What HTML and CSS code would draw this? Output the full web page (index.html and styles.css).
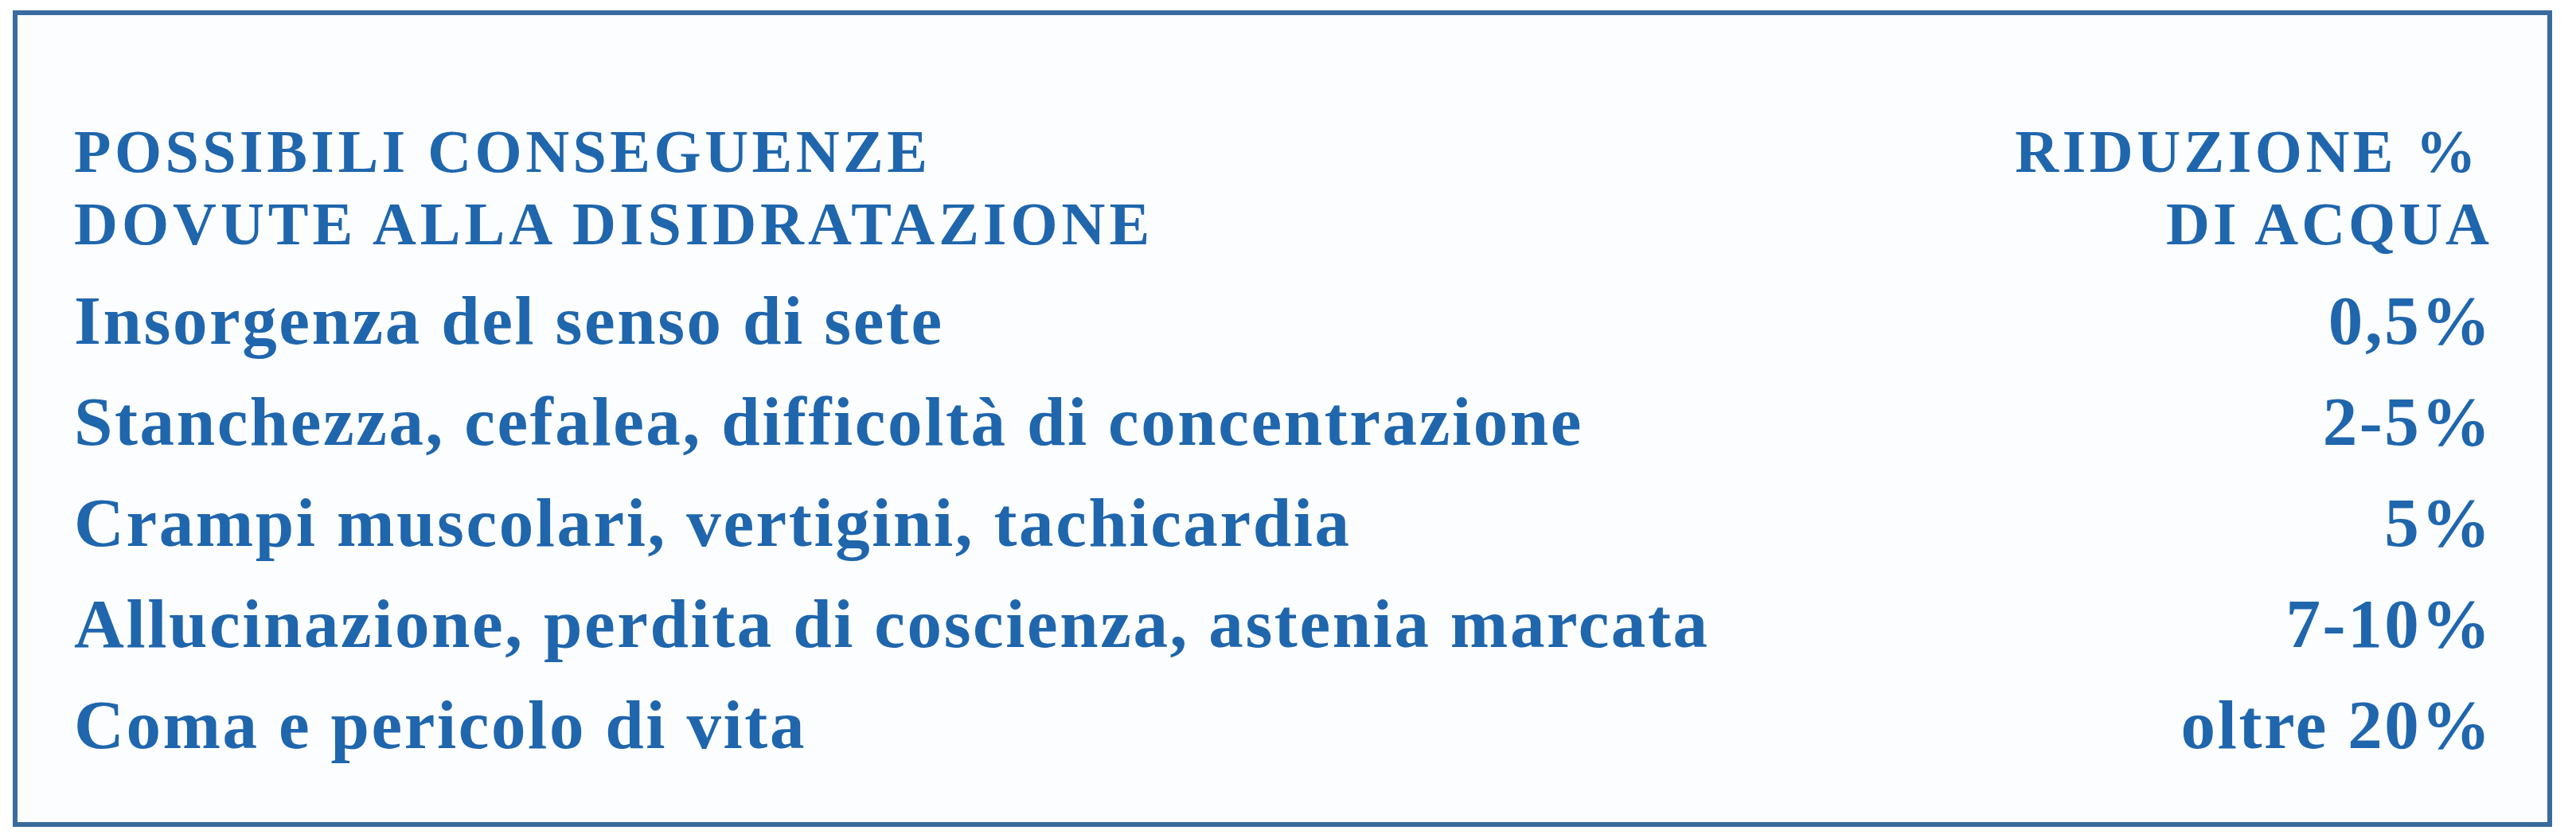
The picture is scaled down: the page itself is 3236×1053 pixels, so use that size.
FILE: index.html
```html
<!DOCTYPE html>
<html lang="it">
<head>
<meta charset="utf-8">
<title>Disidratazione</title>
<link rel="stylesheet" href="styles.css">
</head>
<body>
<div class="frame">
  <div class="table">
    <div class="head head-left">
      <span class="hl hl-1">POSSIBILI CONSEGUENZE</span>
      <span class="hl hl-2">DOVUTE ALLA DISIDRATAZIONE</span>
    </div>
    <div class="head head-right">
      <span class="hl hl-3">RIDUZIONE %</span>
      <span class="hl hl-4">DI ACQUA</span>
    </div>

    <div class="cell label">Insorgenza del senso di sete</div>
    <div class="cell value">0,5%</div>

    <div class="cell label">Stanchezza, cefalea, difficoltà di concentrazione</div>
    <div class="cell value">2-5%</div>

    <div class="cell label">Crampi muscolari, vertigini, tachicardia</div>
    <div class="cell value">5%</div>

    <div class="cell label">Allucinazione, perdita di coscienza, astenia marcata</div>
    <div class="cell value">7-10%</div>

    <div class="cell label">Coma e pericolo di vita</div>
    <div class="cell value">oltre 20%</div>
  </div>
</div>
</body>
</html>
```

FILE: styles.css
```css
html, body {
  margin: 0;
  padding: 0;
  background: #ffffff;
}

body {
  font-family: "Liberation Serif", "Times New Roman", serif;
  color: #1f66ad;
  width: 3236px;
  height: 1053px;
  overflow: hidden;
}

.frame {
  box-sizing: border-box;
  margin: 13px 0 0 16px;
  width: 3190px;
  height: 1026px;
  border: 6px solid #3a6b9f;
  background: #fcfdff;
  padding: 126px 69px 0 71px;
}

.table {
  display: grid;
  grid-template-columns: 1fr auto;
}

.head {
  display: flex;
  flex-direction: column;
  font-weight: bold;
  font-size: 76px;
  line-height: 91px;
  margin-bottom: 12px;
  white-space: nowrap;
}

.head-right {
  align-items: flex-end;
}

.hl-1 { letter-spacing: 4.5px; }
.hl-2 { letter-spacing: 5px; }
.hl-3 { letter-spacing: 4.5px; padding-right: 16px; }
.hl-4 { letter-spacing: 4px; }

.cell {
  font-weight: bold;
  font-size: 87px;
  line-height: 127px;
  letter-spacing: 2.6px;
  white-space: nowrap;
}

.value {
  text-align: right;
}
```
